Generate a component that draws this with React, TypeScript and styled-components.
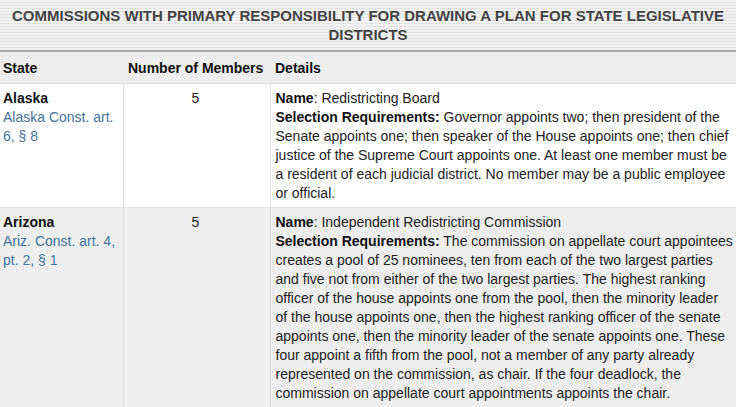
import React from 'react';
import styled, { createGlobalStyle } from 'styled-components';

const GlobalStyle = createGlobalStyle`
  html, body {
    margin: 0;
    padding: 0;
    background: #fff;
  }
  body {
    font-family: 'Liberation Sans', Arial, sans-serif;
    font-size: 14px;
    color: #222;
  }
`;

const Wrapper = styled.div`
  width: 736px;
  overflow: hidden;
`;

const Title = styled.div`
  padding: 6px 10px 6px;
  box-sizing: border-box;
  text-align: center;
  font-size: 15px;
  font-weight: bold;
  line-height: 19px;
  color: #444;
  text-transform: uppercase;
  background: repeating-linear-gradient(
    to bottom,
    #f3f3f3 0,
    #f3f3f3 2px,
    #e3e3e3 2px,
    #e3e3e3 3px
  );
  border-bottom: 2px solid #aaa;
`;

const Table = styled.table`
  width: 100%;
  table-layout: fixed;
  border-collapse: collapse;
`;

const Head = styled.th`
  background: #eee;
  text-align: left;
  font-weight: bold;
  color: #111;
  height: 30px;
  padding: 1px 2px 0 5px;
  border-bottom: 1px solid #ddd;
  white-space: nowrap;

  &:first-child {
    padding-left: 3px;
  }
`;

const Row = styled.tr<{ $shaded?: boolean }>`
  background: ${(p) => (p.$shaded ? '#eee' : '#fff')};
  border-bottom: 1px solid #e2e2e2;
`;

const Cell = styled.td<{ $center?: boolean }>`
  vertical-align: top;
  padding: 5px 5px 4px 3px;
  line-height: 19px;
  text-align: ${(p) => (p.$center ? 'center' : 'left')};
  border-left: 1px solid #ddd;
  color: #222;

  &:first-child {
    border-left: none;
  }
`;

const DetailsCell = styled(Cell)`
  padding-left: 5px;
  padding-right: 3px;
`;

const StateName = styled.div`
  font-weight: bold;
  color: #111;
`;

const Citation = styled.a`
  color: #41739c;
  text-decoration: none;
`;

const Label = styled.strong`
  color: #111;
`;

type Commission = {
  state: string;
  citation: string;
  members: number;
  name: string;
  requirements: string;
};

const commissions: Commission[] = [
  {
    state: 'Alaska',
    citation: 'Alaska Const. art. 6, § 8',
    members: 5,
    name: 'Redistricting Board',
    requirements:
      'Governor appoints two; then president of the Senate appoints one; then speaker of the House appoints one; then chief justice of the Supreme Court appoints one. At least one member must be a resident of each judicial district. No member may be a public employee or official.',
  },
  {
    state: 'Arizona',
    citation: 'Ariz. Const. art. 4, pt. 2, § 1',
    members: 5,
    name: 'Independent Redistricting Commission',
    requirements:
      'The commission on appellate court appointees creates a pool of 25 nominees, ten from each of the two largest parties and five not from either of the two largest parties. The highest ranking officer of the house appoints one from the pool, then the minority leader of the house appoints one, then the highest ranking officer of the senate appoints one, then the minority leader of the senate appoints one. These four appoint a fifth from the pool, not a member of any party already represented on the commission, as chair. If the four deadlock, the commission on appellate court appointments appoints the chair.',
  },
];

const App: React.FC = () => {
  return (
    <Wrapper>
      <GlobalStyle />
      <Title>
        Commissions with primary responsibility for drawing a plan for state
        legislative districts
      </Title>
      <Table>
        <colgroup>
          <col style={{ width: 123 }} />
          <col style={{ width: 147 }} />
          <col />
        </colgroup>
        <thead>
          <tr>
            <Head>State</Head>
            <Head>Number of Members</Head>
            <Head>Details</Head>
          </tr>
        </thead>
        <tbody>
          {commissions.map((c, i) => (
            <Row key={c.state} $shaded={i % 2 === 1}>
              <Cell>
                <StateName>{c.state}</StateName>
                <Citation href="#">{c.citation}</Citation>
              </Cell>
              <Cell $center>{c.members}</Cell>
              <DetailsCell>
                <Label>Name</Label>: {c.name}
                <br />
                <Label>Selection Requirements:</Label> {c.requirements}
              </DetailsCell>
            </Row>
          ))}
        </tbody>
      </Table>
    </Wrapper>
  );
};

export default App;
